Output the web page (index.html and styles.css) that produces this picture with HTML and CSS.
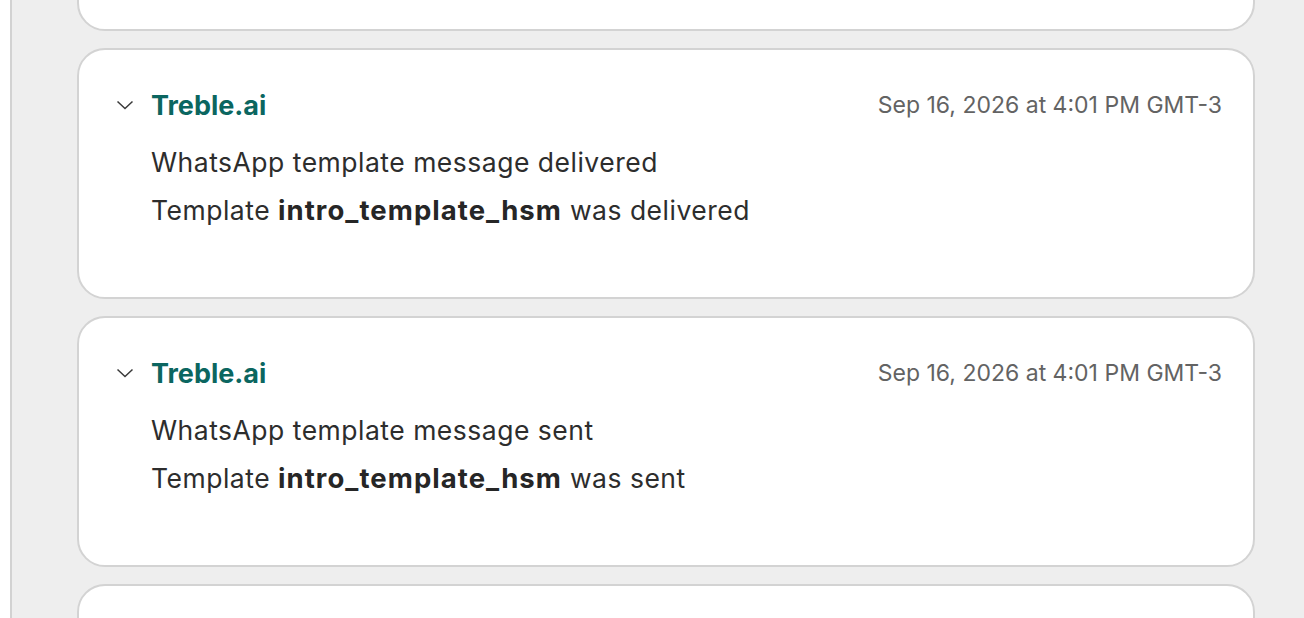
FILE: index.html
```html
<!DOCTYPE html>
<html>
<head>
<meta charset="utf-8">
<link rel="stylesheet" href="styles.css">
</head>
<body>
<div class="page">
  <div class="sidebar"></div>
  <main class="feed">
    <section class="card card-partial"></section>
    <section class="card">
      <header class="card-head">
        <svg class="chevron" width="18" height="10" viewBox="0 0 18 10"><path d="M1.5 1.5 L9 8.5 L16.5 1.5" fill="none" stroke="#3a3a3a" stroke-width="1.5"/></svg>
        <span class="source">Treble.ai</span>
        <span class="time">Sep 16, 2026 at 4:01 PM GMT-3</span>
      </header>
      <div class="card-body">
        <p class="line">WhatsApp template message delivered</p>
        <p class="line">Template <b>intro_template_hsm</b> was delivered</p>
      </div>
    </section>
    <section class="card">
      <header class="card-head">
        <svg class="chevron" width="18" height="10" viewBox="0 0 18 10"><path d="M1.5 1.5 L9 8.5 L16.5 1.5" fill="none" stroke="#3a3a3a" stroke-width="1.5"/></svg>
        <span class="source">Treble.ai</span>
        <span class="time">Sep 16, 2026 at 4:01 PM GMT-3</span>
      </header>
      <div class="card-body">
        <p class="line">WhatsApp template message sent</p>
        <p class="line">Template <b>intro_template_hsm</b> was sent</p>
      </div>
    </section>
    <section class="card"></section>
  </main>
</div>
</body>
</html>
```
FILE: styles.css
```css
* { box-sizing: border-box; }
html, body { margin: 0; padding: 0; height: 100%; overflow: hidden; }
body { font-family: "Inter", "Liberation Sans", sans-serif; background: #fff; }
.page { display: flex; height: 618px; overflow: hidden; }
.sidebar { width: 12px; flex: none; background: #fff; border-right: 2px solid #d2d2d2; }
.feed {
  flex: 1;
  background: #eeeeee;
  padding: 0 49px 0 65px;
  display: flex;
  flex-direction: column;
  gap: 17px;
  overflow: hidden;
}
.card {
  flex: none;
  height: 251px;
  background: #fff;
  border: 2px solid #d3d3d3;
  border-radius: 28px;
  padding: 38px 31px 0 37px;
}
.card-partial { margin-top: -220px; }
.card-head { display: flex; align-items: center; height: 34px; }
.chevron { flex: none; margin-right: 17px; }
.source { font-size: 27px; font-weight: 700; color: #0b6660; }
.time { margin-left: auto; font-size: 23px; color: #636363; }
.card-body { padding-left: 35px; margin-top: 16px; }
.line { margin: 0; font-size: 26.5px; line-height: 48px; color: #2d2d2d; letter-spacing: 0.5px; }
.line b { font-weight: 700; font-size: 27.5px; color: #262626; letter-spacing: 1.05px; }
```
